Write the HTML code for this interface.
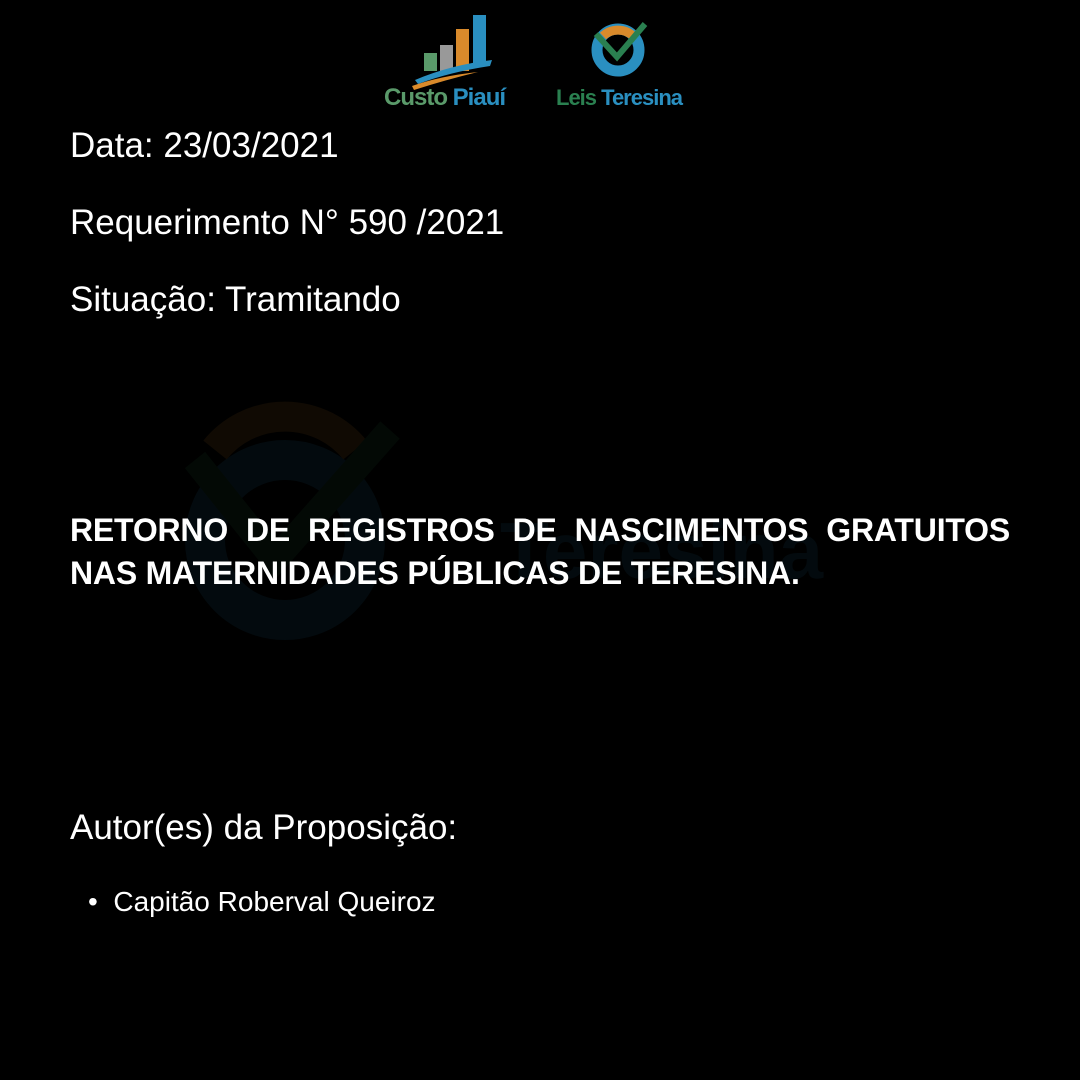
<!DOCTYPE html>
<html><head><meta charset="utf-8"><style>
body{margin:0;width:1080px;height:1080px;background:#000;position:relative;overflow:hidden;font-family:"Liberation Sans",sans-serif;color:#fff}
.t{position:absolute;left:70px;font-size:35px;white-space:nowrap}
.title{position:absolute;left:70px;width:940px;top:509px;font-size:32px;font-weight:bold;line-height:43px;text-align:justify;letter-spacing:-0.2px}
</style></head><body>
<svg style="position:absolute;left:0;top:0" width="1080" height="1080">
 <g opacity="0.07">
  <circle cx="285" cy="540" r="80" fill="none" stroke="#2a8fc0" stroke-width="40"/>
  <path d="M215 450 A90 90 0 0 1 355 450" fill="none" stroke="#d98a2b" stroke-width="30"/>
  <path d="M195 460 L275 560 L390 430" fill="none" stroke="#2a8050" stroke-width="26"/>
  <text x="500" y="578" font-family="Liberation Sans" font-weight="bold" font-size="80" fill="#2a8fc0">Teresina</text>
 </g>
 <rect x="424" y="53" width="13" height="18" fill="#5a9a6a"/>
 <rect x="440" y="45" width="13" height="26" fill="#999"/>
 <rect x="456" y="29" width="13" height="42" fill="#d98a2b"/>
 <rect x="473" y="15" width="13" height="48" fill="#2a8fc0"/>
 <path d="M415 80 Q450 65 492 60 L490 66 Q450 72 418 84Z" fill="#2a8fc0"/>
 <path d="M412 86 Q440 76 478 72 Q445 80 414 90Z" fill="#d98a2b"/>
 <text x="384" y="105" font-family="Liberation Sans" font-weight="bold" font-size="24" fill="#5a9a6a" letter-spacing="-1">Custo <tspan fill="#2a8fc0">Piauí</tspan></text>
 <circle cx="618" cy="50" r="21" fill="none" stroke="#2a8fc0" stroke-width="11"/>
 <path d="M603 36 A22 22 0 0 1 633 36" fill="none" stroke="#d98a2b" stroke-width="9"/>
 <path d="M596 34 L617 57 L645 24" fill="none" stroke="#2a8050" stroke-width="6"/>
 <text x="556" y="105" font-family="Liberation Sans" font-weight="bold" font-size="22" fill="#2a8050" letter-spacing="-1">Leis <tspan fill="#2a8fc0">Teresina</tspan></text>
</svg>
<div class="t" style="top:126px">Data: 23/03/2021</div>
<div class="t" style="top:203px">Requerimento N° 590 /2021</div>
<div class="t" style="top:280px">Situação: Tramitando</div>
<div class="title">RETORNO DE REGISTROS DE NASCIMENTOS GRATUITOS NAS MATERNIDADES PÚBLICAS DE TERESINA.</div>
<div class="t" style="top:808px">Autor(es) da Proposição:</div>
<div class="t" style="top:886px;left:88px;font-size:28px">•&nbsp; Capitão Roberval Queiroz</div>
</body></html>
